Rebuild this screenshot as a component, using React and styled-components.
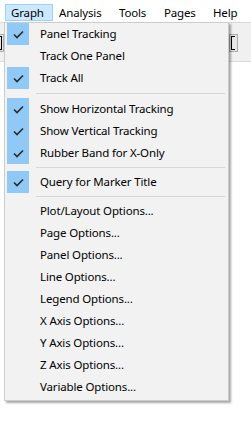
import React from 'react';
import styled, { createGlobalStyle } from 'styled-components';

const GlobalStyle = createGlobalStyle`
    html, body {
        margin: 0;
        padding: 0;
        background: #ffffff;
    }
    body {
        font-family: "Noto Sans", "Open Sans", sans-serif;
        font-size: 11.5px;
        letter-spacing: -0.15px;
        color: #000;
    }
`;

const Window = styled.div`
    position: relative;
    width: 251px;
    height: 423px;
    overflow: hidden;
    background: #ffffff;
`;

const MenuBar = styled.div`
    display: flex;
    align-items: flex-start;
    height: 22px;
    padding: 4px 0 0 5px;
    box-sizing: border-box;
    background: #ffffff;
`;

const BarItem = styled.div`
    width: ${(p) => p.$w}px;
    height: 17px;
    line-height: 15px;
    padding-left: 5px;
    box-sizing: border-box;
    border: 1px solid ${(p) => (p.$open ? '#99d1ff' : 'transparent')};
    background: ${(p) => (p.$open ? '#cce8ff' : 'transparent')};
    white-space: nowrap;
`;

const Toolbar = styled.div`
    display: flex;
    justify-content: space-between;
    align-items: flex-start;
    height: 40px;
    box-sizing: border-box;
    border-top: 1px solid #dadada;
    border-bottom: 1px solid #dadada;
    background: #f0f0f0;
    padding-top: 11px;
`;

const Stub = styled.div`
    width: 9px;
    height: 18px;
    box-sizing: border-box;
    border: 1px solid #adadad;
    background: #e6e6e6;
    position: relative;
    margin: ${(p) => (p.$side === 'left' ? '0 0 0 -5px' : '0 13px 0 0')};
    &::after {
        content: '';
        position: absolute;
        top: 1px;
        bottom: 1px;
        ${(p) => (p.$side === 'left' ? 'right: 1px;' : 'left: 1px;')}
        width: 3px;
        border: 1px solid #000;
        ${(p) => (p.$side === 'left' ? 'border-left: none;' : 'border-right: none;')}
    }
`;

const Popup = styled.div`
    position: absolute;
    left: 4px;
    top: 22px;
    width: 225px;
    box-sizing: border-box;
    border: 1px solid #cccccc;
    background: #f2f2f2;
    padding: 0 2px 2px 2px;
    box-shadow: 2px 2px 2px rgba(0, 0, 0, 0.35);
`;

const Row = styled.div`
    display: flex;
    align-items: center;
    height: 22px;
`;

const CheckBox = styled.div`
    width: 22px;
    height: 22px;
    flex: none;
    display: flex;
    align-items: center;
    justify-content: center;
    background: ${(p) => (p.$on ? '#90c8f6' : 'transparent')};
`;

const Label = styled.span`
    margin-left: 11px;
    white-space: nowrap;
    line-height: 22px;
`;

const Separator = styled.div`
    height: ${(p) => p.$h}px;
    display: flex;
    align-items: center;
    padding-left: 29px;
    padding-right: 1px;
    &::before {
        content: '';
        flex: 1;
        height: 1px;
        background: #d7d7d7;
    }
`;

const Check = () => (
    <svg width="22" height="22" viewBox="0 0 22 22">
        <polyline points="7,11.5 10,14.5 16,8.5" fill="none" stroke="#2b2b2b" strokeWidth="1.6" />
    </svg>
);

const bar = [
    { name: 'Graph', w: 48, open: true },
    { name: 'Analysis', w: 60 },
    { name: 'Tools', w: 45 },
    { name: 'Pages', w: 49 },
    { name: 'Help', w: 40 },
];

const menu = [
    { label: 'Panel Tracking', on: true },
    { label: 'Track One Panel' },
    { label: 'Track All', on: true },
    { sep: 9 },
    { label: 'Show Horizontal Tracking', on: true },
    { label: 'Show Vertical Tracking', on: true },
    { label: 'Rubber Band for X-Only', on: true },
    { sep: 7 },
    { label: 'Query for Marker Title', on: true },
    { sep: 7 },
    { label: 'Plot/Layout Options...' },
    { label: 'Page Options...' },
    { label: 'Panel Options...' },
    { label: 'Line Options...' },
    { label: 'Legend Options...' },
    { label: 'X Axis Options...' },
    { label: 'Y Axis Options...' },
    { label: 'Z Axis Options...' },
    { label: 'Variable Options...' },
];

const App = () => {
    return (
        <>
            <GlobalStyle />
            <Window>
                <MenuBar>
                    {bar.map((b) => (
                        <BarItem key={b.name} $w={b.w} $open={b.open}>
                            {b.name}
                        </BarItem>
                    ))}
                </MenuBar>
                <Toolbar>
                    <Stub $side="left" />
                    <Stub $side="right" />
                </Toolbar>
                <Popup>
                    {menu.map((m, i) =>
                        m.sep ? (
                            <Separator key={i} $h={m.sep} />
                        ) : (
                            <Row key={i}>
                                <CheckBox $on={m.on}>{m.on && <Check />}</CheckBox>
                                <Label>{m.label}</Label>
                            </Row>
                        )
                    )}
                </Popup>
            </Window>
        </>
    );
};

export default App;
